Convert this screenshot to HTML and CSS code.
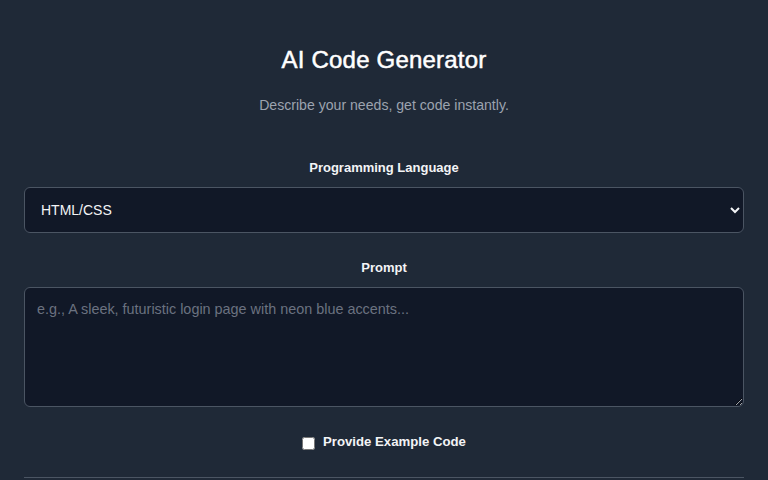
FILE: index.html
```html
<!DOCTYPE html>
<html lang="en">
<head>
  <meta charset="UTF-8">
  <meta name="viewport" content="width=device-width, initial-scale=1.0">
  <title>AI Code Generator</title>
  <link rel="stylesheet" href="styles.css">
</head>
<body>
  <main class="generator">
    <h1 class="generator-title">AI Code Generator</h1>
    <p class="generator-subtitle">Describe your needs, get code instantly.</p>

    <div class="field">
      <label class="field-label" for="language">Programming Language</label>
      <select class="field-select" id="language">
        <option>HTML/CSS</option>
        <option>JavaScript</option>
        <option>Python</option>
      </select>
    </div>

    <div class="field">
      <label class="field-label" for="prompt">Prompt</label>
      <textarea class="field-textarea" id="prompt" placeholder="e.g., A sleek, futuristic login page with neon blue accents..."></textarea>
    </div>

    <label class="check-row">
      <input type="checkbox" class="check-box">
      <span>Provide Example Code</span>
    </label>

    <div class="output-section"></div>
  </main>
</body>
</html>
```

FILE: styles.css
```css
* {
  margin: 0;
  padding: 0;
  box-sizing: border-box;
}

body {
  font-family: "Liberation Sans", Arial, sans-serif;
  background-color: #1f2937;
  color: #f3f4f6;
  padding: 0 24px;
}

.generator {
  max-width: 720px;
  margin: 0 auto;
  padding-top: 44px;
  display: flex;
  flex-direction: column;
}

.generator-title {
  font-size: 24px;
  font-weight: 500;
  text-align: center;
  color: #ffffff;
  line-height: 32px;
  letter-spacing: 0.2px;
  -webkit-text-stroke: 0.5px #ffffff;
}

.generator-subtitle {
  margin-top: 19px;
  font-size: 14.1px;
  color: #9ca3af;
  text-align: center;
  line-height: 20px;
}

.field {
  display: flex;
  flex-direction: column;
  gap: 9px;
  margin-top: 43px;
}

.field + .field {
  margin-top: 25px;
}

.field-label {
  font-size: 13px;
  font-weight: 700;
  text-align: center;
  color: #f3f4f6;
  line-height: 20px;
}

.field-select,
.field-textarea {
  width: 100%;
  background-color: #111827;
  border: 1px solid #4b5563;
  border-radius: 6px;
  color: #f3f4f6;
  font-family: inherit;
  font-size: 14px;
  color-scheme: dark;
}

.field-select {
  height: 46px;
  padding: 0 12px;
}

.field-textarea {
  height: 120px;
  padding: 11px 12px;
  resize: vertical;
  line-height: 20px;
  font-size: 14.4px;
}

.field-textarea::placeholder {
  color: #6b7280;
}

.check-row {
  display: flex;
  justify-content: center;
  align-items: center;
  gap: 8px;
  margin-top: 25px;
  font-size: 13.2px;
  font-weight: 700;
  color: #f3f4f6;
  line-height: 20px;
}

.check-box {
  width: 13px;
  height: 13px;
  margin-top: 2px;
}

.output-section {
  margin-top: 25px;
  border-top: 1px solid #4b5563;
  height: 40px;
}
```
